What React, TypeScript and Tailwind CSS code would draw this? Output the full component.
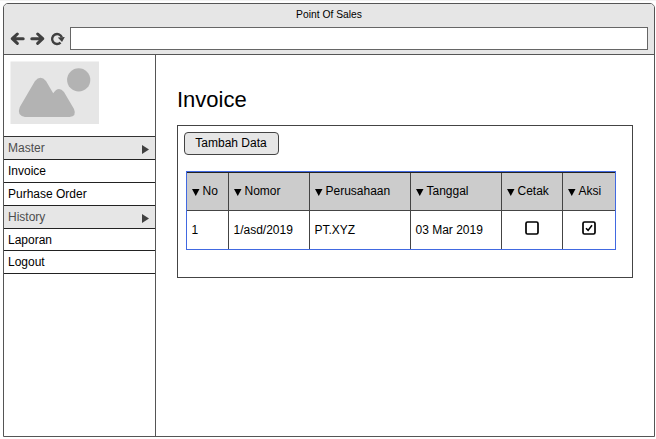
import React from "react";

type MenuItem = { label: string; group?: boolean; height: string };

const menu: MenuItem[] = [
  { label: "Master", group: true, height: "h-[23px]" },
  { label: "Invoice", height: "h-[23px]" },
  { label: "Purhase Order", height: "h-[23px]" },
  { label: "History", group: true, height: "h-[23px]" },
  { label: "Laporan", height: "h-[22px]" },
  { label: "Logout", height: "h-[23px]" },
];

const columns = [
  { label: "No", width: "w-[42px]" },
  { label: "Nomor", width: "w-[81px]" },
  { label: "Perusahaan", width: "w-[101px]" },
  { label: "Tanggal", width: "w-[91px]" },
  { label: "Cetak", width: "w-[61px]" },
  { label: "Aksi", width: "w-[52px]" },
];

const row = ["1", "1/asd/2019", "PT.XYZ", "03 Mar 2019"];

function Arrow({ flip = false }: { flip?: boolean }) {
  return (
    <svg width="15" height="14" viewBox="0 0 15 14" className={flip ? "-scale-x-100" : ""}>
      <path d="M7.3 2 L2.3 6.7 L7.3 11.4 M3 6.7 H13.2" fill="none" stroke="#404040" strokeWidth="3" strokeLinecap="round" strokeLinejoin="round" />
    </svg>
  );
}

function Reload() {
  return (
    <svg width="15" height="14" viewBox="0 0 15 14">
      <path d="M10.6 10.6 A5 5 0 1 1 11.8 5.2" fill="none" stroke="#404040" strokeWidth="2.4" />
      <path d="M7.8 5.4 L14.8 5 L12 10 Z" fill="#404040" />
    </svg>
  );
}

function Checkbox({ checked = false }: { checked?: boolean }) {
  return (
    <svg width="14" height="14" viewBox="0 0 14 14">
      <rect x="1" y="1" width="12" height="12" rx="1.5" fill="white" stroke="black" strokeWidth="1.7" />
      {checked && <path d="M4 7.3 L6.1 9.4 L10 4.3" fill="none" stroke="black" strokeWidth="1.6" />}
    </svg>
  );
}

function Placeholder() {
  return (
    <svg width="90" height="63" viewBox="0 0 90 63" className="ml-1.5 mt-1.5 block">
      <rect x="0.5" y="0.5" width="88.5" height="62.5" fill="#e6e6e6" />
      <circle cx="68.7" cy="18.9" r="11.6" fill="#b3b3b3" />
      <path d="M9.8 46 L25 20 Q30.5 13.5 36 20 L43.2 32.3 Q48.5 24.5 54 31 L64 48 Q67 55.5 59.5 55.9 H15 Q6.5 54.5 9.8 46 Z" fill="#b3b3b3" />
    </svg>
  );
}

export default function App() {
  return (
    <div className="h-[439px] w-[656px] overflow-hidden border-t border-[#f3f3f3] bg-white pl-[3px] pt-[2px] font-['Liberation_Sans',Arial,sans-serif] text-xs text-black">
      <div className="flex h-[434px] w-[652px] flex-col overflow-hidden rounded-t-[5px] border border-[#555]">
        <header className="h-[51px] shrink-0 border-b border-[#555] bg-[#e6e6e6]">
          <div className="flex h-[23px] items-start justify-center text-[10.3px] leading-[21px]">Point Of Sales</div>
          <div className="flex">
            <div className="flex h-6 w-[66px] shrink-0 items-center gap-[5px] pl-1.5">
              <Arrow />
              <Arrow flip />
              <Reload />
            </div>
            <div className="h-[23px] w-[578px] border border-[#666] bg-white" />
          </div>
        </header>

        <div className="flex min-h-0 flex-1">
          <aside className="w-[152px] shrink-0 border-r border-[#555]">
            <Placeholder />
            <nav className="mt-3 border-t border-[#333]">
              {menu.map((item) => (
                <div
                  key={item.label}
                  className={`flex items-center justify-between border-b border-[#222] pl-1 pr-1.5 ${item.height} ${item.group ? "bg-[#e6e6e6] text-[#4d4d4d]" : "text-black"}`}
                >
                  <span>{item.label}</span>
                  {item.group && (
                    <svg width="7" height="9" viewBox="0 0 7 9" className="mt-0.5">
                      <path d="M0 0 L7 4.5 L0 9 Z" fill="#404040" />
                    </svg>
                  )}
                </div>
              ))}
            </nav>
          </aside>

          <main className="pl-[21px] pt-8">
            <h1 className="text-[22px] leading-[25px]">Invoice</h1>
            <section className="mt-[13px] h-[153px] w-[456px] border border-[#444] pl-1.5 pt-1.5">
              <button className="block h-[23px] w-[95px] rounded-[4px] border border-[#444] bg-[#e6e6e6] pb-px pr-px leading-[19px]">Tambah Data</button>
              <div className="ml-[2px] mt-4 w-[430px] border border-[#4169e1]">
                <div className="flex h-[39px] border-b border-t border-b-[#444] border-t-[#222] bg-[#ccc]">
                  {columns.map((column) => (
                    <div key={column.label} className={`flex items-center border-r border-[#444] pb-0.5 pl-[4.5px] last:border-r-0 ${column.width}`}>
                      <svg width="8" height="7" viewBox="0 0 8 7" className="mr-[3px] mt-[3px] shrink-0">
                        <path d="M0 0 H7.5 L3.75 7 Z" fill="black" />
                      </svg>
                      {column.label}
                    </div>
                  ))}
                </div>
                <div className="flex h-[38px]">
                  {columns.map((column, index) => (
                    <div key={column.label} className={`flex items-center border-r border-[#444] last:border-r-0 ${column.width} ${index > 3 ? "justify-center pb-1" : "pl-[4.5px]"}`}>
                      {index < 4 ? row[index] : <Checkbox checked={index === 5} />}
                    </div>
                  ))}
                </div>
              </div>
            </section>
          </main>
        </div>
      </div>
    </div>
  );
}
